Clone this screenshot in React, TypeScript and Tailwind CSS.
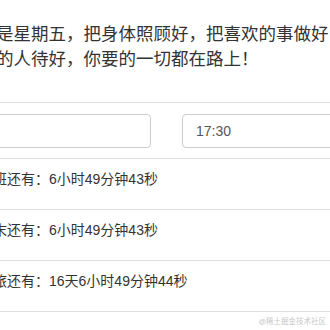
import React from "react";

const font = { fontFamily: '"Liberation Sans", "Noto Sans CJK SC", sans-serif' };

function Row({ label, value }: { label: string; value: string }) {
  return (
    <div className="border-t border-[#dddddd] h-[51px] pt-[10px]">
      <div className="ml-[-7px] whitespace-nowrap text-[14px] leading-[20px] text-[#333333]">
        {label}还有：{value}
      </div>
    </div>
  );
}

export default function App() {
  return (
    <div
      className="relative w-[330px] h-[330px] overflow-hidden bg-white"
      style={font}
    >
      <div className="pt-[22px] text-[17.5px] leading-[25px] text-[#333333] whitespace-nowrap">
        <div className="ml-[-4px]">是星期五，把身体照顾好，把喜欢的事做好，</div>
        <div className="ml-[-4px]">的人待好，你要的一切都在路上！</div>
      </div>
      <div className="mt-[30px] border-t border-[#dddddd]" />
      <div className="mt-[11px] flex h-[34px]">
        <div className="ml-[-20px] w-[171px] shrink-0 rounded-[4px] border border-[#cccccc]" />
        <div className="ml-[31px] w-[200px] shrink-0 rounded-[4px] border border-[#cccccc] pl-[13px] flex items-center text-[14px] text-[#555555]">
          17:30
        </div>
      </div>
      <div className="mt-[10px]">
        <Row label="班" value="6小时49分钟43秒" />
        <Row label="末" value="6小时49分钟43秒" />
        <Row label="旅" value="16天6小时49分钟44秒" />
        <div className="border-t border-[#dddddd]" />
      </div>
      <div className="absolute right-[4px] bottom-[3px] text-[7.5px] leading-[10px] text-[#c8c8c8] whitespace-nowrap">
        @稀土掘金技术社区
      </div>
    </div>
  );
}
